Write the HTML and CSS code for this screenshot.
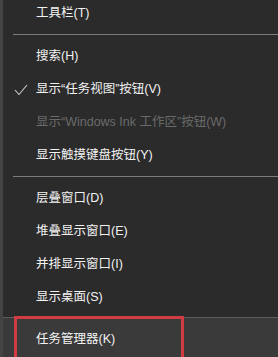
FILE: index.html
```html
<!DOCTYPE html>
<html lang="zh-CN">
<head>
<meta charset="utf-8">
<link rel="stylesheet" href="styles.css">
</head>
<body>
<div class="menu">
  <div class="item first">工具栏(T)</div>
  <div class="sep"></div>
  <div class="item">搜索(H)</div>
  <div class="item checked">
    <svg class="check" width="16" height="14" viewBox="0 0 16 14"><polyline points="1,7 5,11.5 13,2" fill="none" stroke="#cfcfcf" stroke-width="1.1"/></svg>
    显示“任务视图”按钮(V)</div>
  <div class="item disabled">显示“Windows Ink 工作区”按钮(W)</div>
  <div class="item">显示触摸键盘按钮(Y)</div>
  <div class="sep"></div>
  <div class="item">层叠窗口(D)</div>
  <div class="item">堆叠显示窗口(E)</div>
  <div class="item">并排显示窗口(I)</div>
  <div class="item">显示桌面(S)</div>
  <div class="item hover">任务管理器(K)<div class="mark"></div></div>
</div>
</body>
</html>
```
FILE: styles.css
```css
html, body {
  margin: 0;
  padding: 0;
  background: #2b2b2b;
  overflow: hidden;
}
.menu {
  width: 275px;
  height: 357px;
  border-left: 3px solid #444444;
  background: #2b2b2b;
  font-family: "Liberation Sans", "Noto Sans CJK SC", sans-serif;
  font-size: 12.5px;
  color: #f2f2f2;
  overflow: hidden;
}
.item {
  height: 33px;
  line-height: 33px;
  padding-left: 33px;
  position: relative;
  white-space: nowrap;
}
.item.first {
  margin-top: -3px;
}
.sep {
  height: 1px;
  background: #7c7c7c;
  margin: 4px 0 5px 10px;
}
.check {
  position: absolute;
  left: 11px;
  top: 10px;
}
.disabled {
  color: #6a6a6a;
}
.hover {
  margin-top: 3px;
  border-top: 1px solid #5e5e5e;
  background: #3a3a3a;
  height: 45px;
  line-height: 42px;
}
.mark {
  position: absolute;
  left: 11px;
  top: -2px;
  width: 164px;
  height: 50px;
  border: 3px solid #d13c43;
}
```
